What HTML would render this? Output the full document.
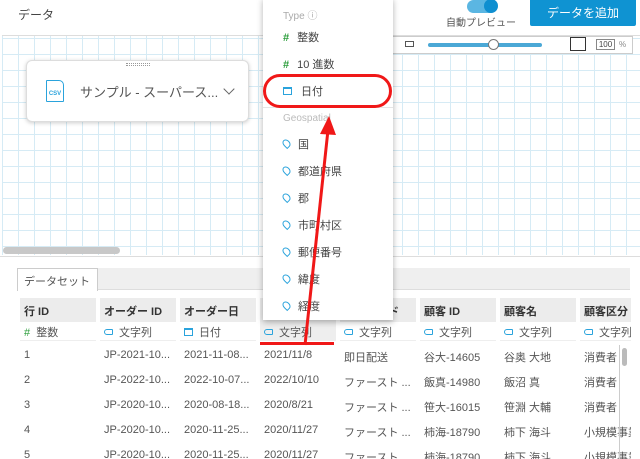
<!DOCTYPE html>
<html><head><meta charset="utf-8"><style>
*{margin:0;padding:0;box-sizing:border-box}
body{width:640px;height:459px;overflow:hidden;background:#fff;font-family:"Liberation Sans","Noto Sans CJK JP",sans-serif;color:#444;position:relative;font-size:12px}
.abs{position:absolute}
.grid{left:2px;top:35px;width:638px;height:220px;background-color:#fff;background-image:linear-gradient(#d6ebf5 1px,transparent 1px),linear-gradient(90deg,#d6ebf5 1px,transparent 1px);background-size:16px 16px;background-position:0 2px;border-top:1px solid #ddd}
.col{position:absolute;width:76px;overflow:hidden;white-space:nowrap;font-size:11px}
.h{height:24px;background:#ececec;font-weight:bold;padding:5px 0 0 4px;color:#333}
.t{height:19px;border-bottom:1px solid #eee;padding:2px 0 0 4px;color:#555}
.r{height:25px;padding:8px 0 0 4px;color:#555}
.dd div{position:absolute;left:20px;font-size:11px;color:#444}
.pin{display:inline-block;width:7px;height:9px;border:1.5px solid #2aa3dc;border-radius:50% 50% 50% 0;transform:rotate(-45deg);margin-right:8px}
.tag{display:inline-block;width:9px;height:6px;border:1.3px solid #2aa3dc;border-radius:3px 1px 1px 3px;margin-right:6px;vertical-align:1px}
.cal{display:inline-block;width:9px;height:8px;border:1.3px solid #2aa3dc;border-top-width:2.5px;margin-right:6px;vertical-align:0}
</style></head><body>
<div class="abs" style="left:18px;top:6px;font-size:12px">データ</div>
<div class="abs" style="left:467px;top:0;width:30px;height:13px;border-radius:7px;background:#5bb6e2"></div>
<div class="abs" style="left:484px;top:-1px;width:14px;height:14px;border-radius:50%;background:#0f8fd0"></div>
<div class="abs" style="left:446px;top:14px;font-size:10px;color:#555">自動プレビュー</div>
<div class="abs" style="left:530px;top:0;width:106px;height:26px;background:#0f93d2;color:#fff;font-size:12px;text-align:center;line-height:26px;border-radius:0 0 2px 2px">データを追加</div>
<div class="abs grid"></div>
<div class="abs" style="left:385px;top:36px;width:248px;height:18px;background:#fff;border:1px solid #ccc"></div>
<div class="abs" style="left:405px;top:41px;width:9px;height:6px;border:1.5px solid #555"></div>
<div class="abs" style="left:428px;top:43px;width:114px;height:4px;background:#4ba8d6;border-radius:2px"></div>
<div class="abs" style="left:488px;top:39px;width:11px;height:11px;border-radius:50%;background:#fff;border:1px solid #777"></div>
<div class="abs" style="left:570px;top:37px;width:16px;height:14px;border:1px solid #333;background:#fff"></div>
<div class="abs" style="left:596px;top:39px;width:19px;height:11px;border:1px solid #888;font-size:8px;line-height:9px;text-align:center">100</div>
<div class="abs" style="left:619px;top:40px;font-size:8px;color:#888">%</div>
<div class="abs" style="left:3px;top:247px;width:117px;height:7px;background:#c8c8c8;border-radius:4px"></div>
<div class="abs" style="left:0;top:256px;width:640px;height:1px;background:#ddd"></div>
<div class="abs" style="left:26px;top:60px;width:223px;height:62px;background:#fff;border:1px solid #ddd;border-radius:6px;box-shadow:0 1px 4px rgba(0,0,0,.2)"></div>
<div class="abs" style="left:126px;top:63px;width:24px;height:3px;border-top:1px dotted #999;border-bottom:1px dotted #999"></div>
<div class="abs" style="left:46px;top:80px;width:18px;height:22px;border:1.5px solid #2aa3dc;border-radius:1px 5px 1px 1px;font-size:6px;color:#2aa3dc;font-weight:bold;padding-top:10px;text-align:center">CSV</div>
<div class="abs" style="left:80px;top:82px;font-size:13px;color:#555">サンプル - スーパース...</div>
<div class="abs" style="left:225px;top:85px;width:8px;height:8px;border-right:1.5px solid #666;border-bottom:1.5px solid #666;transform:rotate(45deg)"></div>
<div class="abs" style="left:17px;top:268px;width:613px;height:22px;background:#efefef;border-bottom:1px solid #ddd"></div>
<div class="abs" style="left:17px;top:268px;width:81px;height:23px;background:#fff;border:1px solid #ccc;border-bottom:none;font-size:11px;padding:4px 0 0 6px;color:#555">データセット</div>
<div class="abs" style="left:0;top:298px;width:631px;height:161px;overflow:hidden">
<div class="col" style="left:20px"><div class="h">行 ID</div><div class="t"><span style="color:#2a9d3a">#</span>&nbsp; 整数</div><div class="r">1</div><div class="r">2</div><div class="r">3</div><div class="r">4</div><div class="r">5</div></div>
<div class="col" style="left:100px"><div class="h">オーダー ID</div><div class="t"><span class="tag"></span>文字列</div><div class="r">JP-2021-10...</div><div class="r">JP-2022-10...</div><div class="r">JP-2020-10...</div><div class="r">JP-2020-10...</div><div class="r">JP-2020-10...</div></div>
<div class="col" style="left:180px"><div class="h">オーダー日</div><div class="t"><span class="cal"></span>日付</div><div class="r">2021-11-08...</div><div class="r">2022-10-07...</div><div class="r">2020-08-18...</div><div class="r">2020-11-25...</div><div class="r">2020-11-25...</div></div>
<div class="col" style="left:260px"><div class="h">出荷日</div><div class="t" style="background:#eee"><span class="tag"></span>文字列</div><div class="r">2021/11/8</div><div class="r">2022/10/10</div><div class="r">2020/8/21</div><div class="r">2020/11/27</div><div class="r">2020/11/27</div></div>
<div class="col" style="left:340px"><div class="h">出荷モード</div><div class="t"><span class="tag"></span>文字列</div><div class="r">即日配送</div><div class="r">ファースト ...</div><div class="r">ファースト ...</div><div class="r">ファースト ...</div><div class="r">ファースト ...</div></div>
<div class="col" style="left:420px"><div class="h">顧客 ID</div><div class="t"><span class="tag"></span>文字列</div><div class="r">谷大-14605</div><div class="r">飯真-14980</div><div class="r">笹大-16015</div><div class="r">柿海-18790</div><div class="r">柿海-18790</div></div>
<div class="col" style="left:500px"><div class="h">顧客名</div><div class="t"><span class="tag"></span>文字列</div><div class="r">谷奥 大地</div><div class="r">飯沼 真</div><div class="r">笹淵 大輔</div><div class="r">柿下 海斗</div><div class="r">柿下 海斗</div></div>
<div class="col" style="left:580px"><div class="h">顧客区分</div><div class="t"><span class="tag"></span>文字列</div><div class="r">消費者</div><div class="r">消費者</div><div class="r">消費者</div><div class="r">小規模事業</div><div class="r">小規模事業</div></div>
</div>
<div class="abs" style="left:619px;top:345px;width:1px;height:114px;background:#ccc"></div>
<div class="abs" style="left:622px;top:348px;width:5px;height:18px;background:#bbb;border-radius:3px"></div>
<div class="abs" style="left:260px;top:342px;width:74px;height:3px;background:#f01818"></div>
<div class="abs dd" style="left:263px;top:-2px;width:130px;height:322px;background:#fff;box-shadow:0 2px 6px rgba(0,0,0,.3)">
<div style="top:9px;color:#aaa;font-size:10px">Type ⓘ</div>
<div style="top:31px"><b style="color:#2a9d3a;margin-right:8px">#</b>整数</div>
<div style="top:58px"><b style="color:#2a9d3a;margin-right:8px">#</b>10 進数</div>
<div style="top:85px"><span class="cal" style="margin-right:9px"></span>日付</div>
<div style="left:0;top:109px;width:130px;height:1px;background:#e5e5e5"></div>
<div style="top:115px;color:#bbb;font-size:10px">Geospatial</div>
<div style="top:138px"><span class="pin"></span>国</div>
<div style="top:165px"><span class="pin"></span>都道府県</div>
<div style="top:192px"><span class="pin"></span>郡</div>
<div style="top:219px"><span class="pin"></span>市町村区</div>
<div style="top:246px"><span class="pin"></span>郵便番号</div>
<div style="top:273px"><span class="pin"></span>緯度</div>
<div style="top:300px"><span class="pin"></span>経度</div>
</div>
<div class="abs" style="left:263px;top:74px;width:129px;height:34px;border:3px solid #f01818;border-radius:17px"></div>
<svg class="abs" style="left:0;top:0" width="640" height="459"><line x1="305" y1="345" x2="328" y2="130" stroke="#f01818" stroke-width="3"/><polygon points="329,116 320,134 336,135" fill="#f01818"/></svg>
</body></html>
